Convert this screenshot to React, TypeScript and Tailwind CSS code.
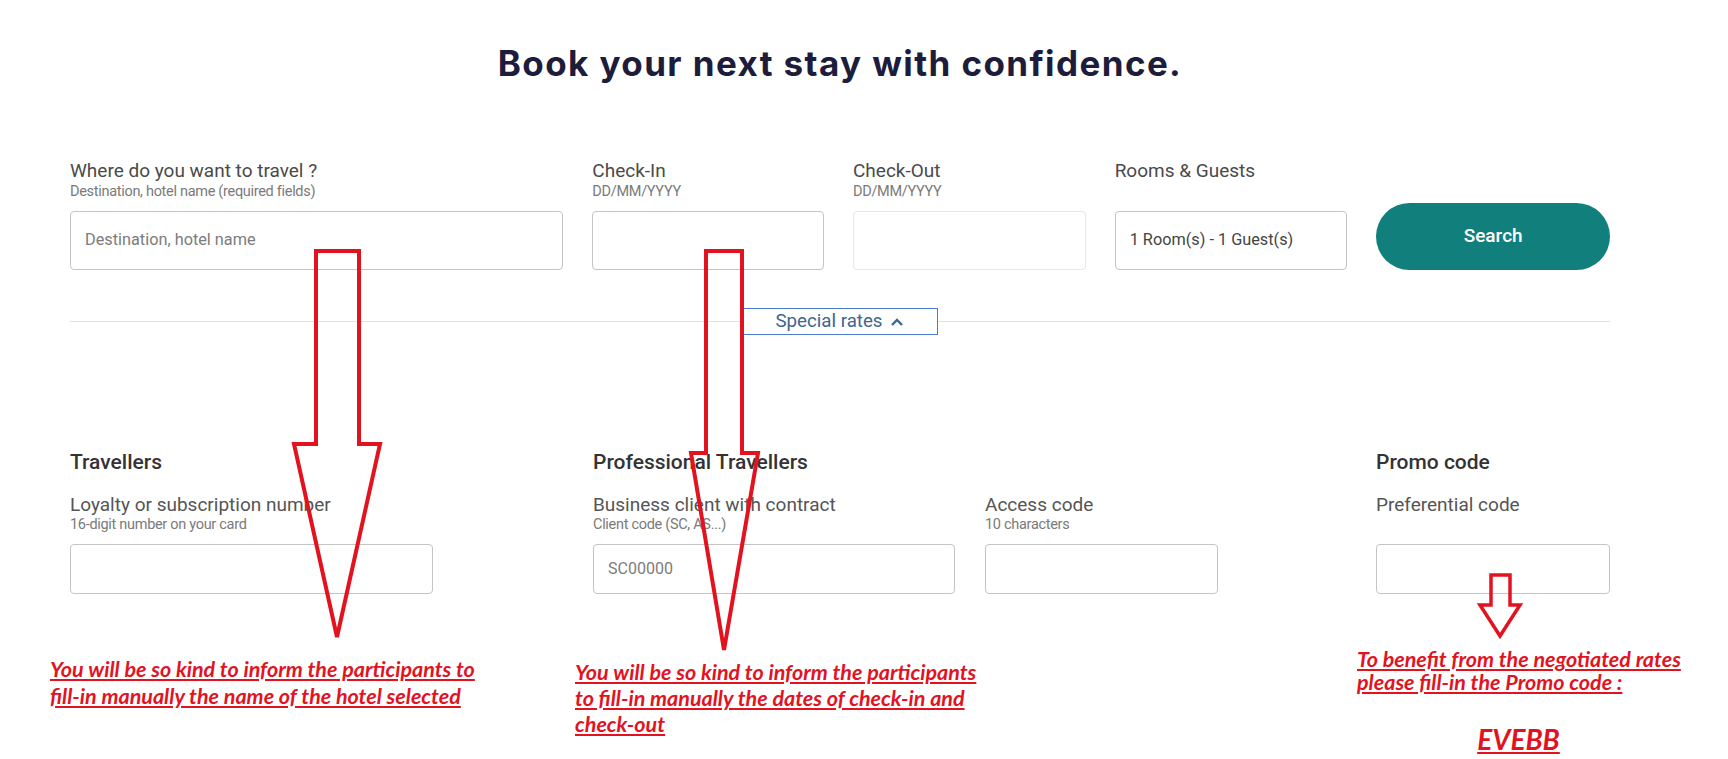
const red = "#e2131f";

function Field({
  label,
  sub,
  width,
  placeholder,
  value,
  light,
}: {
  label: string;
  sub?: string;
  width: string;
  placeholder?: string;
  value?: string;
  light?: boolean;
}) {
  return (
    <div className={`flex flex-col ${width}`}>
      <div className="h-[22px] text-[19px] leading-[22px] text-[#4a4a4a]">{label}</div>
      <div className="mt-[2px] h-[16px] text-[14.5px] leading-[16px] text-[#7a7a7a] tracking-[-0.3px]">
        {sub}
      </div>
      <div
        className={`mt-[11px] h-[59px] rounded-[4px] border-[1.5px] ${
          light ? "border-[#e6e6e6]" : "border-[#c4c4c4]"
        } flex items-center px-[14px] text-[16.3px]`}
      >
        {value ? (
          <span className="text-[#444]">{value}</span>
        ) : (
          <span className="text-[#7c7c7c]">{placeholder}</span>
        )}
      </div>
    </div>
  );
}

function SmallField({
  label,
  sub,
  width,
  placeholder,
}: {
  label: string;
  sub?: string;
  width: string;
  placeholder?: string;
}) {
  return (
    <div className={`flex flex-col ${width}`}>
      <div className="mt-[20px] h-[22px] text-[19px] leading-[22px] text-[#555]">{label}</div>
      <div className="h-[16px] mt-[1px] text-[14.5px] leading-[16px] text-[#7a7a7a] tracking-[-0.3px]">
        {sub}
      </div>
      <div className="mt-[11px] h-[50px] rounded-[4px] border-[1.5px] border-[#c4c4c4] flex items-center px-[14px] text-[16px] text-[#7c7c7c]">
        {placeholder}
      </div>
    </div>
  );
}

function Heading({ children }: { children: React.ReactNode }) {
  return (
    <div className="h-[24px] text-[21px] leading-[24px] font-medium text-[#333]">{children}</div>
  );
}

export default function App() {
  return (
    <div
      className="relative w-[1728px] h-[759px] overflow-hidden bg-white"
      style={{ fontFamily: "Roboto, 'Liberation Sans', sans-serif" }}
    >
      {/* Title */}
      <h1
        className="pt-[43px] w-[1680px] text-center text-[35px] leading-[40px] font-bold text-[#1d1d3b] tracking-[1.4px]"
        style={{ fontFamily: "Inter, 'Liberation Sans', sans-serif" }}
      >
        Book your next stay with confidence.
      </h1>

      <div className="ml-[70px] w-[1540px]">
        {/* Search row */}
        <div className="mt-[77px] flex items-end gap-[29px]">
          <Field
            label="Where do you want to travel ?"
            sub="Destination, hotel name (required fields)"
            width="w-[494px]"
            placeholder="Destination, hotel name"
          />
          <Field label="Check-In" sub="DD/MM/YYYY" width="w-[232px]" />
          <Field label="Check-Out" sub="DD/MM/YYYY" width="w-[233px]" light />
          <Field label="Rooms & Guests" width="w-[233px]" value="1 Room(s) - 1 Guest(s)" />
          <button className="w-[234px] h-[67px] rounded-full bg-[#11807c] text-white text-[19px] font-medium">
            Search
          </button>
        </div>

        {/* Divider + special rates */}
        <div className="mt-[38px] h-[27px] relative flex items-center justify-center">
          <div className="absolute left-0 right-0 top-[13px] h-px bg-[#e2e2e2]" />
          <div className="relative w-[195px] h-[27px] bg-white border-[1.5px] border-[#4a7bd0] flex items-center justify-center gap-[8px] text-[18.7px] text-[#3d6690]">
            Special rates
            <svg width="14" height="10" viewBox="0 0 14 10" fill="none">
              <path d="M2 8 L7 3 L12 8" stroke="#3d6690" strokeWidth="2.4" />
            </svg>
          </div>
        </div>

        {/* Special rates form */}
        <div className="mt-[115px] flex">
          <div className="w-[494px] flex flex-col">
            <Heading>Travellers</Heading>
            <SmallField
              label="Loyalty or subscription number"
              sub="16-digit number on your card"
              width="w-[363px]"
            />
          </div>
          <div className="ml-[29px] flex flex-col">
            <Heading>Professional Travellers</Heading>
            <div className="flex gap-[30px]">
              <SmallField
                label="Business client with contract"
                sub="Client code (SC, AS...)"
                width="w-[362px]"
                placeholder="SC00000"
              />
              <SmallField label="Access code" sub="10 characters" width="w-[233px]" />
            </div>
          </div>
          <div className="ml-[158px] flex flex-col">
            <Heading>Promo code</Heading>
            <SmallField label="Preferential code" width="w-[234px]" />
          </div>
        </div>
      </div>

      {/* Annotations */}
      <div
        className="pl-[50px] mt-[54px] flex font-bold italic underline text-[21.5px] leading-[26px] whitespace-nowrap"
        style={{ fontFamily: "Lato, 'Liberation Sans', sans-serif", color: red }}
      >
        <div className="w-[525px] mt-[8px] leading-[27px]">
          You will be so kind to inform the participants to
          <br />
          fill-in manually the name of the hotel selected
        </div>
        <div className="w-[782px] mt-[11px]">
          You will be so kind to inform the participants
          <br />
          to fill-in manually the dates of check-in and
          <br />
          check-out
        </div>
        <div className="w-[323px] leading-[23px]">
          To benefit from the negotiated rates
          <br />
          please fill-in the Promo code :
          <div className="mt-[28px] text-center text-[28px] leading-[34px]">EVEBB</div>
        </div>
      </div>

      {/* Arrows drawn over the form */}
      <svg
        className="absolute left-0 top-0 pointer-events-none"
        width="1728"
        height="759"
        viewBox="0 0 1728 759"
        fill="none"
      >
        <polygon
          points="316,251 359,251 359,444 380,444 337,637 294,444 316,444"
          stroke={red}
          strokeWidth="4"
          strokeLinejoin="miter"
        />
        <polygon
          points="706,251 742,251 742,453 758,453 724,650 691,453 706,453"
          stroke={red}
          strokeWidth="4"
        />
        <polygon
          points="1491,575 1510,575 1510,605 1520,605 1500,636 1480,605 1491,605"
          stroke={red}
          strokeWidth="3.5"
        />
      </svg>
    </div>
  );
}
